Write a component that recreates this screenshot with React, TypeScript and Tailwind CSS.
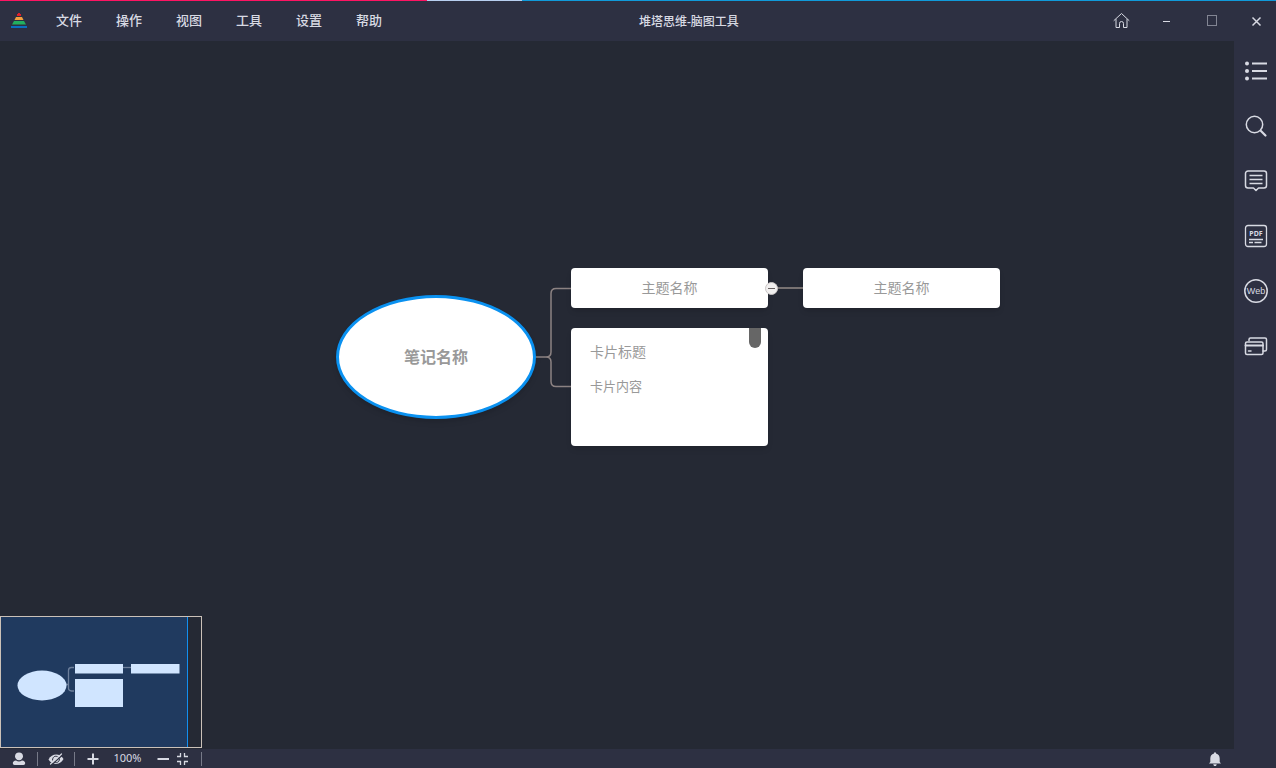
import React from "react";

const menus = ["文件", "操作", "视图", "工具", "设置", "帮助"];

type IconProps = { children: React.ReactNode; size?: number };

function Icon({ children, size = 24 }: IconProps) {
  return (
    <svg
      width={size}
      height={size}
      viewBox={`0 0 ${size} ${size}`}
      fill="none"
      stroke="currentColor"
      strokeWidth="1.5"
      strokeLinecap="round"
      strokeLinejoin="round"
      aria-hidden="true"
    >
      {children}
    </svg>
  );
}

function Logo() {
  return (
    <svg width="16" height="16" viewBox="0 0 16 16" aria-hidden="true">
      <path d="M7 1h2v1h1v2H6V2h1z" fill="#e0202c" />
      <path d="M5 5h6l1.500 3h-9z" fill="#f0a040" />
      <path d="M3 9h10l2 3.500H1z" fill="#22b060" />
      <path d="M0 14h16v2H0z" fill="#0b6fc0" />
    </svg>
  );
}

const tools = [
  {
    label: "大纲",
    icon: (
      <>
        <path d="M8 4.500h15M8 12h15M8 19.500h15" strokeWidth="2" strokeLinecap="butt" />
        <g fill="currentColor" stroke="none">
          <circle cx="3" cy="4.500" r="2" />
          <circle cx="3" cy="12" r="2" />
          <circle cx="3" cy="19.500" r="2" />
        </g>
      </>
    ),
  },
  {
    label: "搜索",
    icon: (
      <>
        <circle cx="10.500" cy="10.500" r="8.200" />
        <path d="M17 17l4.500 4.500" strokeWidth="2.200" />
      </>
    ),
  },
  {
    label: "评论",
    icon: (
      <>
        <path d="M4 2h16a2.500 2.500 0 0 1 2.500 2.500v12A2.500 2.500 0 0 1 20 19h-5.500L12 21.500 9.500 19H4a2.500 2.500 0 0 1-2.500-2.500v-12A2.500 2.500 0 0 1 4 2z" />
        <path d="M5.500 6.500h13M5.500 10.500h13M5.500 14.500h13" strokeLinecap="butt" />
      </>
    ),
  },
  {
    label: "PDF",
    icon: (
      <>
        <rect x="1.500" y="1.500" width="21" height="21" rx="2.500" strokeWidth="1.300" />
        <text x="12" y="12" textAnchor="middle" fill="currentColor" stroke="none" className="text-[7px] font-bold">
          PDF
        </text>
        <path d="M5 15.500h14M5 18.500h4M10.500 18.500h7" strokeWidth="1.300" strokeLinecap="butt" />
      </>
    ),
  },
  {
    label: "Web",
    icon: (
      <>
        <circle cx="12" cy="12" r="11.200" />
        <text
          x="12"
          y="15"
          textAnchor="middle"
          fill="currentColor"
          stroke="none"
          className="font-['Liberation_Sans',sans-serif] text-[9px]"
        >
          Web
        </text>
      </>
    ),
  },
  {
    label: "卡片",
    icon: (
      <>
        <path d="M5 6.500v-1A1.500 1.500 0 0 1 6.500 4h14.500a1.500 1.500 0 0 1 1.500 1.500v10a1.500 1.500 0 0 1-1.500 1.500h-2" />
        <rect x="1.500" y="8" width="17.500" height="12.500" rx="1.500" />
        <path d="M1.500 11.500H19" strokeWidth="1.800" />
        <path d="M4.500 17h2.500" />
      </>
    ),
  },
];

const windowControls = [
  {
    label: "主页",
    icon: (
      <path
        d="M3 10.500l7.500-7 7.500 7M5 9.500v8h3.500v-4a2 2 0 0 1 4 0v4H16v-8"
        strokeWidth="1"
      />
    ),
  },
  { label: "最小化", icon: <path d="M7 11.500h7" strokeWidth="1" strokeLinecap="butt" /> },
  {
    label: "最大化",
    icon: <rect x="6.500" y="5.500" width="9" height="10" strokeWidth="1" opacity="0.500" strokeLinejoin="miter" />,
  },
  { label: "关闭", icon: <path d="M6.500 7.500l8 8M14.500 7.500l-8 8" strokeWidth="1.500" strokeLinecap="butt" /> },
];

function Separator() {
  return <span className="h-[14px] w-px bg-[#777a88]" />;
}

function MiniMap() {
  return (
    <div className="absolute bottom-px left-0 h-[132px] w-[202px] border border-[#cbc1b8] bg-[#252934]">
      <svg width="200" height="130" viewBox="0 0 200 130" aria-label="缩略图" role="img">
        <rect width="186" height="130" fill="#203a5f" />
        <path d="M186.500 0v130" stroke="#128ff0" />
        <g fill="none" stroke="#6d7f9b" strokeWidth="1.300">
          <path d="M65 67.500h2.500V53.500q0-3 3-3H73M67.500 67.500v4q0 2 3 2.500H73" />
          <path d="M121 50.500h9" />
        </g>
        <g fill="#d0e5ff">
          <ellipse cx="41" cy="68.500" rx="24.500" ry="15" />
          <rect x="74" y="47" width="48" height="9.500" />
          <rect x="130" y="47" width="48.500" height="9.500" />
          <rect x="74" y="62" width="48" height="28" />
        </g>
      </svg>
    </div>
  );
}

function Canvas() {
  return (
    <main className="relative min-w-0 flex-1 overflow-hidden bg-[#252934] text-[#999999]">
      <svg className="absolute left-[530px] top-[227px]" width="280" height="140" viewBox="0 0 280 140" fill="none" stroke="#8c8282" strokeWidth="1.500" aria-hidden="true">
        <path d="M5 89h11q5 0 5-5V25.500q0-5 5-5H42M16 89q5 0 5 5v19.500q0 5 5 5H42" />
        <path d="M238 20h36" stroke="#787272" strokeWidth="2" />
      </svg>
      <div className="absolute left-[336px] top-[254px] flex h-[124px] w-[200px] items-center justify-center rounded-[50%] border-[3px] border-[#0a91f0] bg-white text-base font-bold shadow-md">
        笔记名称
      </div>
      <div className="absolute left-[571px] top-[227px] flex h-[40px] w-[197px] items-center justify-center rounded bg-white text-sm shadow-md">
        主题名称
      </div>
      <div className="absolute left-[803px] top-[227px] flex h-[40px] w-[197px] items-center justify-center rounded bg-white text-sm shadow-md">
        主题名称
      </div>
      <button
        type="button"
        aria-label="折叠"
        className="absolute left-[765px] top-[241px] flex size-[13px] items-center justify-center rounded-full border border-[#c9c5c5] bg-[#f1efef]"
      >
        <span className="h-px w-[7px] bg-[#666060]" />
      </button>
      <article className="absolute left-[571px] top-[287px] flex h-[118px] w-[197px] flex-col gap-[14px] rounded bg-white px-[19px] py-[14px] shadow-md">
        <h2 className="text-sm leading-5">卡片标题</h2>
        <p className="text-[13px] leading-5">卡片内容</p>
        <span className="absolute right-[7px] top-0 h-5 w-3 rounded-b-full bg-[#666666]" />
      </article>
      <MiniMap />
    </main>
  );
}

function Footer() {
  return (
    <footer className="flex h-[19px] shrink-0 items-center justify-between bg-[#2d3042] pl-[11px] pr-[53px]">
      <div className="flex items-center">
        <button type="button" aria-label="用户">
          <Icon size={16}>
            <g fill="currentColor" stroke="none">
              <path d="M8 1.500c2.500 0 4 1.500 4 3.800S10.300 9.300 8 9.300 4 7.600 4 5.300 5.500 1.500 8 1.500z" />
              <path d="M5 9.500q3 1.800 6 0 3.200.5 3.200 2.800 0 1.700-1.700 1.700h-9q-1.700 0-1.700-1.700 0-2.300 3.200-2.800z" />
            </g>
          </Icon>
        </button>
        <span className="flex w-[37px] items-center justify-between pl-[10px]">
          <Separator />
          <button type="button" aria-label="隐藏">
            <Icon size={16}>
              <path d="M.5 8.500C4 2 12 2 15.500 8 12 14.500 4 14.500.500 8.500z" fill="currentColor" stroke="none" />
              <path d="M4.500 9c0-4 4-5 6-2.500M11.500 8c0 3.500-3.500 4.500-5.500 3" stroke="#2d3042" strokeWidth="1" />
              <path d="M4 13.500L14.500 4" stroke="#2d3042" strokeWidth="1.200" />
              <path d="M2.500 13L13.500 3" strokeWidth="1.200" />
            </Icon>
          </button>
        </span>
        <span className="flex w-[37px] items-center justify-between pl-[10px]">
          <Separator />
          <button type="button" aria-label="放大">
            <Icon size={16}>
              <path d="M2.500 8h11M8 2.500v11" strokeWidth="2" strokeLinecap="butt" />
            </Icon>
          </button>
        </span>
        <span className="w-[53px] pb-px text-center text-[11px] leading-4">100%</span>
        <button type="button" aria-label="缩小">
          <Icon size={16}>
            <path d="M3.500 8H15" strokeWidth="2" strokeLinecap="butt" />
          </Icon>
        </button>
        <button type="button" aria-label="适应窗口" className="ml-1">
          <Icon size={16}>
            <path d="M3 5.500h3.500V2M10.500 2v3.500H14M3 10.500h3.500V14M10.500 14v-3.500H14" strokeLinecap="butt" strokeLinejoin="miter" strokeWidth="1.300" />
          </Icon>
        </button>
        <span className="ml-[11px] flex">
          <Separator />
        </span>
      </div>
      <button type="button" aria-label="通知">
        <Icon size={16}>
          <path d="M7 1.500h2v1c2.500.5 3.700 2.500 3.700 5V11L14 12.500H2L3.300 11V7.500c0-2.500 1.200-4.500 3.700-5zM6.200 13.200h3.600L9 15H7z" fill="currentColor" stroke="none" />
        </Icon>
      </button>
    </footer>
  );
}

export default function App() {
  return (
    <div className="flex h-screen flex-col overflow-hidden bg-[#252934] font-['Noto_Sans','Noto_Sans_CJK_SC',sans-serif] text-[#d8dae3]">
      <div className="flex h-px shrink-0">
        <span className="w-[33.5%] bg-[#ff1463]" />
        <span className="w-[95px] bg-[#b8cff0]" />
        <span className="flex-1 bg-[#109ada]" />
      </div>
      <header className="flex h-[40px] shrink-0 items-center bg-[#2d3042]">
        <div className="flex w-1/2 items-center pb-[2px] pl-[11px]">
          <Logo />
          <nav className="flex gap-[34px] pl-[29px]">
            {menus.map((menu) => (
              <button key={menu} type="button" className="text-[13px] font-medium leading-5">
                {menu}
              </button>
            ))}
          </nav>
        </div>
        <h1 className="flex-1 pl-px pt-[2px] text-[12px] font-medium leading-5">堆塔思维-脑图工具</h1>
        <div className="flex gap-[25px] pb-[2px] pr-[10px]">
          {windowControls.map(({ label, icon }) => (
            <button key={label} type="button" aria-label={label}>
              <Icon size={20}>{icon}</Icon>
            </button>
          ))}
        </div>
      </header>
      <div className="flex min-h-0 flex-1">
        <Canvas />
        <aside className="flex w-[42px] shrink-0 flex-col items-center bg-[#2d3042] pl-[2px] pt-[2px]">
          {tools.map(({ label, icon }) => (
            <button key={label} type="button" aria-label={label} className="flex h-[55px] items-center">
              <Icon>{icon}</Icon>
            </button>
          ))}
        </aside>
      </div>
      <Footer />
    </div>
  );
}
